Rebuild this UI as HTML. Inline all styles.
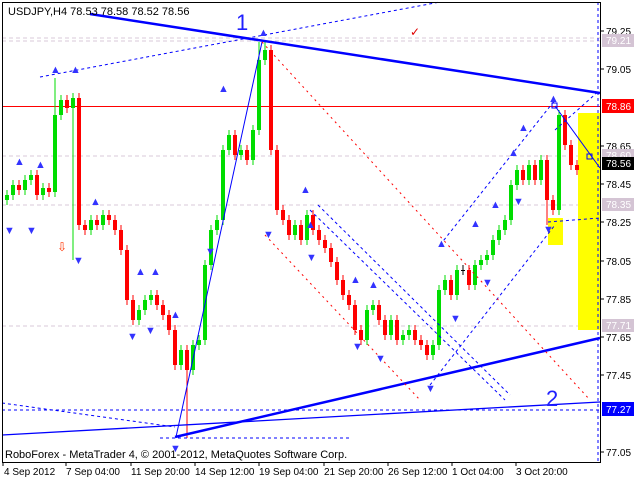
<!DOCTYPE html>
<html><head><meta charset="utf-8"><style>
html,body{margin:0;padding:0;background:#fff;width:640px;height:480px;overflow:hidden}
svg{display:block}
text{font-family:"Liberation Sans",sans-serif}
</style></head><body>
<svg id="s" width="640" height="480" xmlns="http://www.w3.org/2000/svg">
<rect width="640" height="480" fill="#fff"/>
<!-- grid dashed levels -->
<g stroke="#d8c8d8" stroke-dasharray="4,3" stroke-width="1">
<line x1="2" y1="41" x2="600" y2="41"/><line x1="2" y1="38" x2="600" y2="38"/>
<line x1="2" y1="156" x2="600" y2="156"/>
<line x1="2" y1="205" x2="600" y2="205"/>
<line x1="2" y1="326" x2="600" y2="326"/>
</g>
<rect x="578" y="113" width="22" height="217" fill="#ffff00"/>
<rect x="548" y="218" width="15" height="27" fill="#ffff00"/>
<line x1="2" y1="106.5" x2="600" y2="106.5" stroke="#ff0000"/>
<g id="c"></g>
<!-- lines -->
<g stroke="#0000ff" fill="none">
<line x1="90" y1="14" x2="600" y2="93" stroke-width="2.5"/>
<line x1="175" y1="437" x2="600" y2="338" stroke-width="2.5"/>
<line x1="2" y1="435" x2="600" y2="402" stroke-width="1.3"/>
<line x1="176" y1="437" x2="262" y2="42" stroke-width="1"/>
<line x1="555" y1="106" x2="600" y2="168" stroke-width="1"/>
<rect x="552" y="103" width="5" height="5"/><rect x="587" y="154" width="5" height="5"/>
</g>
<g stroke="#0000ff" fill="none" stroke-dasharray="3,3" stroke-width="1">
<line x1="40" y1="77" x2="440" y2="2"/>
<line x1="2" y1="410" x2="600" y2="410"/>
<line x1="2" y1="403" x2="175" y2="427"/>
<line x1="160" y1="438" x2="350" y2="438"/>
<line x1="598" y1="2" x2="598" y2="462"/>
<line x1="310" y1="210" x2="505" y2="400"/>
<line x1="318" y1="205" x2="510" y2="395"/>
<line x1="440" y1="245" x2="555" y2="100"/>
<line x1="430" y1="385" x2="555" y2="225"/>
<line x1="548" y1="222" x2="600" y2="218"/>
<line x1="555" y1="130" x2="600" y2="90"/>
</g>
<g stroke="#ff0000" fill="none" stroke-dasharray="2,4" stroke-width="1">
<line x1="262" y1="42" x2="590" y2="400"/>
<line x1="265" y1="235" x2="420" y2="400"/>
</g>
<g fill="#3333ff" font-size="11">
<text x="50" y="73">▲</text><text x="70" y="73">▲</text><text x="258" y="36">▲</text><text x="218" y="92">▲</text>
<text x="548" y="102">▲</text><text x="518" y="131">▲</text><text x="508" y="156">▲</text><text x="490" y="208">▲</text>
<text x="470" y="227">▲</text><text x="436" y="247">▲</text><text x="300" y="193">▲</text><text x="350" y="283">▲</text>
<text x="368" y="288">▲</text><text x="14" y="165">▲</text><text x="35" y="168">▲</text><text x="90" y="205">▲</text>
<text x="135" y="275">▲</text><text x="150" y="275">▲</text><text x="170" y="318">▲</text><text x="305" y="228">▲</text>
<text x="4" y="234">▼</text><text x="26" y="234">▼</text><text x="73" y="264">▼</text><text x="127" y="340">▼</text>
<text x="145" y="334">▼</text><text x="170" y="452">▼</text><text x="205" y="255">▼</text><text x="263" y="238">▼</text>
<text x="306" y="261">▼</text><text x="352" y="350">▼</text><text x="375" y="362">▼</text><text x="425" y="392">▼</text>
<text x="450" y="322">▼</text><text x="482" y="286">▼</text><text x="513" y="205">▼</text><text x="543" y="233">▼</text>
</g>
<text x="57" y="251" fill="#ff3300" font-size="12">⇩</text>
<text x="410" y="36" fill="#e00000" font-size="12">✓</text>
<text x="236" y="30" fill="#2020ff" font-size="22">1</text>
<text x="546" y="406" fill="#2020ff" font-size="22">2</text>
<text x="8" y="15" font-size="11" fill="#000">USDJPY,H4  78.53 78.58 78.52 78.56</text>
<text x="5" y="458" font-size="11" fill="#000">RoboForex - MetaTrader 4, © 2001-2012, MetaQuotes Software Corp.</text>
<!-- frame -->
<line x1="600.5" y1="2" x2="600.5" y2="463" stroke="#000"/>
<line x1="2" y1="462.5" x2="601" y2="462.5" stroke="#000"/>
<line x1="2.5" y1="2" x2="2.5" y2="463" stroke="#000"/>
<line x1="2" y1="2.5" x2="601" y2="2.5" stroke="#000"/>
<g font-size="10" fill="#000">
<text x="606" y="35">79.25</text><text x="606" y="73">79.05</text><text x="606" y="150">78.65</text>
<text x="606" y="188">78.45</text><text x="606" y="226">78.25</text><text x="606" y="265">78.05</text>
<text x="606" y="303">77.85</text><text x="606" y="341">77.65</text><text x="606" y="379">77.45</text>
<text x="606" y="456">77.05</text>
</g>
<g stroke="#000"><line x1="600" y1="31" x2="604" y2="31"/><line x1="600" y1="69" x2="604" y2="69"/><line x1="600" y1="146" x2="604" y2="146"/><line x1="600" y1="184" x2="604" y2="184"/><line x1="600" y1="222" x2="604" y2="222"/><line x1="600" y1="261" x2="604" y2="261"/><line x1="600" y1="299" x2="604" y2="299"/><line x1="600" y1="337" x2="604" y2="337"/><line x1="600" y1="375" x2="604" y2="375"/><line x1="600" y1="452" x2="604" y2="452"/></g>
<g font-size="10" fill="#fff">
<rect x="602" y="34" width="32" height="13" fill="#d4c4d4"/><text x="606" y="44">79.21</text>
<rect x="602" y="99" width="32" height="14" fill="#ff0000"/><text x="606" y="110">78.86</text>
<rect x="602" y="149" width="32" height="13" fill="#d4c4d4"/><text x="606" y="159">78.60</text>
<rect x="602" y="157" width="32" height="13" fill="#000"/><text x="606" y="167">78.56</text>
<rect x="602" y="198" width="32" height="13" fill="#d4c4d4"/><text x="606" y="208">78.35</text>
<rect x="602" y="319" width="32" height="13" fill="#d4c4d4"/><text x="606" y="329">77.71</text>
<rect x="602" y="402" width="32" height="14" fill="#0000ff"/><text x="606" y="413">77.27</text>
</g>
<g font-size="10" fill="#000">
<text x="4" y="475">4 Sep 2012</text><text x="66" y="475">7 Sep 04:00</text><text x="131" y="475">11 Sep 20:00</text>
<text x="195" y="475">14 Sep 12:00</text><text x="259" y="475">19 Sep 04:00</text><text x="324" y="475">21 Sep 20:00</text>
<text x="388" y="475">26 Sep 12:00</text><text x="452" y="475">1 Oct 04:00</text><text x="516" y="475">3 Oct 20:00</text>
</g>
<g stroke="#000"><line x1="3" y1="462" x2="3" y2="466"/><line x1="66" y1="462" x2="66" y2="466"/><line x1="131" y1="462" x2="131" y2="466"/><line x1="195" y1="462" x2="195" y2="466"/><line x1="259" y1="462" x2="259" y2="466"/><line x1="324" y1="462" x2="324" y2="466"/><line x1="388" y1="462" x2="388" y2="466"/><line x1="452" y1="462" x2="452" y2="466"/><line x1="516" y1="462" x2="516" y2="466"/></g>
</svg>
<script>
var c=[195,185,190,180,175,195,188,192,115,100,108,98,225,230,220,225,215,220,230,250,300,320,310,300,295,305,315,330,365,350,370,345,340,265,230,220,150,135,155,150,160,130,60,50,150,210,220,235,225,240,215,230,240,248,262,280,295,305,330,340,310,305,320,335,320,340,335,330,340,345,355,345,290,280,295,270,270,285,265,260,255,240,230,220,185,170,180,165,180,160,200,210,115,145,165,170];
var sp={42:[42,0],43:[42,0],30:[0,438],8:[78,0],11:[0,260],90:[0,225],91:[0,0]};
var g=document.getElementById('c'),h='',p=200;
for(var i=0;i<c.length;i++){var x=5+i*6,o=p,cl=c[i],t=Math.min(o,cl),b=Math.max(o,cl);var hi=t-5,lo=b+5;if(sp[i]){if(sp[i][0])hi=sp[i][0];if(sp[i][1])lo=sp[i][1];}
var col=cl<o?'#00dd00':'#ff0000';if(b-t<1){b=t+1;col='#000';}
h+='<line x1="'+(x+2)+'" y1="'+hi+'" x2="'+(x+2)+'" y2="'+lo+'" stroke="'+col+'" stroke-width="1"/>';
h+='<rect x="'+x+'" y="'+t+'" width="4" height="'+(b-t)+'" fill="'+col+'"/>';p=cl;}
g.innerHTML=h;
</script>
</body></html>
